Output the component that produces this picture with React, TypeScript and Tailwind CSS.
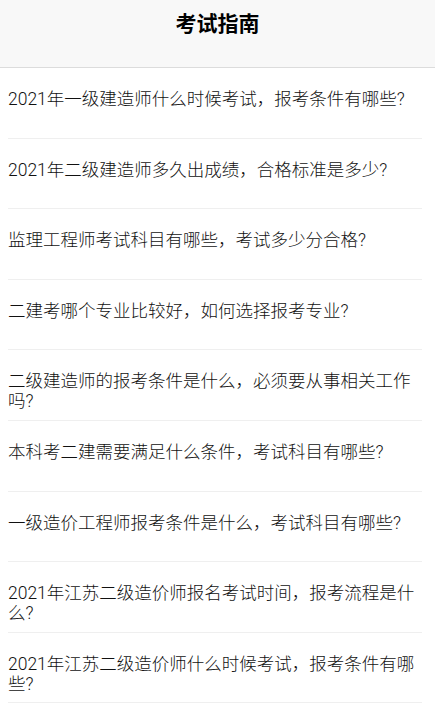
const questions = [
  "2021年一级建造师什么时候考试，报考条件有哪些?",
  "2021年二级建造师多久出成绩，合格标准是多少?",
  "监理工程师考试科目有哪些，考试多少分合格?",
  "二建考哪个专业比较好，如何选择报考专业?",
  "二级建造师的报考条件是什么，必须要从事相关工作吗?",
  "本科考二建需要满足什么条件，考试科目有哪些?",
  "一级造价工程师报考条件是什么，考试科目有哪些?",
  "2021年江苏二级造价师报名考试时间，报考流程是什么?",
  "2021年江苏二级造价师什么时候考试，报考条件有哪些?",
];

export default function App() {
  return (
    <div
      className="min-h-screen bg-white text-[#111]"
      style={{ fontFamily: 'Roboto, "Noto Sans CJK SC", sans-serif' }}
    >
      <header className="h-[68px] bg-[#f8f8f8] border-b border-[#dcdcdc] pt-[10px] text-center">
        <h1 className="text-[21px] leading-[28px] font-bold text-black">考试指南</h1>
      </header>

      <ul>
        {questions.map((q) => (
          <li
            key={q}
            className="h-[70.6px] ml-2 mr-[13px] border-b border-[#efefef] pt-[21px] overflow-hidden"
          >
            <p className="text-[17.5px] leading-[20px] font-light">{q}</p>
          </li>
        ))}
      </ul>
    </div>
  );
}
